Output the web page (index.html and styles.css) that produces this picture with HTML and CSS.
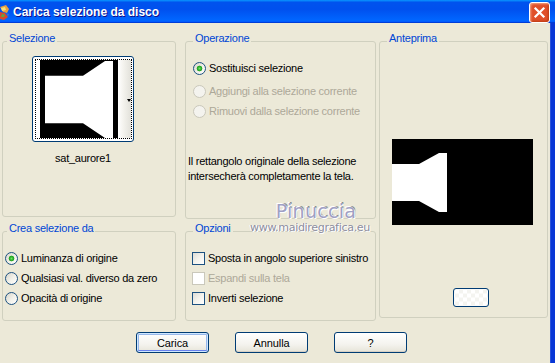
FILE: index.html
```html
<!DOCTYPE html>
<html lang="it">
<head>
<meta charset="utf-8">
<title>Carica selezione da disco</title>
<link rel="stylesheet" href="styles.css">
</head>
<body>
<div class="window">
  <div class="titlebar">
    <svg class="app-icon" width="10" height="18" viewBox="0 0 10 18">
      <path d="M0 3 L6 1 L9 5 L7 9 L3 8 Z" fill="#e8a040"/>
      <path d="M0 8 L5 9 L8 13 L4 16 L0 15 Z" fill="#d94a2a"/>
      <path d="M1 4 L5 3 L6 6 L2 7 Z" fill="#f6e27a"/>
      <path d="M2 10 L5 11 L4 13 L1 13 Z" fill="#5aa845"/>
      <path d="M6 9 L9 10 L8 13 Z" fill="#3a6fd0"/>
    </svg>
    <span class="title">Carica selezione da disco</span>
    <span class="close" role="button" aria-label="Chiudi">
      <svg width="19" height="19" viewBox="0 0 19 19">
        <path d="M5.5 5.5 L13.5 13.5 M13.5 5.5 L5.5 13.5" stroke="#ffffff" stroke-width="2.2" stroke-linecap="square"/>
      </svg>
    </span>
  </div>
  <div class="client">
    <div class="groups">
      <fieldset class="group g-sel">
        <legend>Selezione</legend>
        <div class="thumb-wrap">
          <div class="thumb">
            <div class="focus">
              <svg class="thumb-img" width="78" height="78" viewBox="0 0 78 79" preserveAspectRatio="none">
                <rect width="78" height="79" fill="#000"/>
                <polygon points="5,16 43,16 65,1 73,1 73,79 65,79 43,64 5,64" fill="#fff"/>
              </svg>
              <div class="strip"><span class="arrow"></span></div>
            </div>
          </div>
          <div class="thumb-name">sat_aurore1</div>
        </div>
      </fieldset>

      <fieldset class="group g-op">
        <legend>Operazione</legend>
        <label class="opt row1"><input type="radio" class="radio" name="op" checked><span>Sostituisci selezione</span></label>
        <label class="opt row2 disabled"><input type="radio" class="radio" name="op" disabled><span>Aggiungi alla selezione corrente</span></label>
        <label class="opt disabled"><input type="radio" class="radio" name="op" disabled><span>Rimuovi dalla selezione corrente</span></label>
        <p class="note">Il rettangolo originale della selezione intersecherà completamente la tela.</p>
      </fieldset>

      <fieldset class="group g-prev">
        <legend>Anteprima</legend>
        <svg class="preview" width="141" height="86" viewBox="0 0 141 86">
          <rect width="141" height="86" fill="#000"/>
          <polygon points="0,25 27,25 47,14 55,14 55,73 47,73 27,62 0,62" fill="#fff"/>
        </svg>
        <button class="mini-btn" aria-label="Sfondo"></button>
      </fieldset>

      <fieldset class="group g-crea">
        <legend>Crea selezione da</legend>
        <label class="opt"><input type="radio" class="radio" name="src" checked><span>Luminanza di origine</span></label>
        <label class="opt"><input type="radio" class="radio" name="src"><span>Qualsiasi val. diverso da zero</span></label>
        <label class="opt"><input type="radio" class="radio" name="src"><span>Opacità di origine</span></label>
      </fieldset>

      <fieldset class="group g-opz">
        <legend>Opzioni</legend>
        <label class="opt"><input type="checkbox" class="check"><span>Sposta in angolo superiore sinistro</span></label>
        <label class="opt disabled"><input type="checkbox" class="check" disabled><span>Espandi sulla tela</span></label>
        <label class="opt"><input type="checkbox" class="check"><span>Inverti selezione</span></label>
      </fieldset>
    </div>
    <div class="buttons">
      <button class="btn default">Carica</button>
      <button class="btn">Annulla</button>
      <button class="btn">?</button>
    </div>
  </div>
  <div class="watermark">
    <div class="wm-name">Pinuccia</div>
    <div class="wm-url">www.maidiregrafica.eu</div>
  </div>
</div>
</body>
</html>
```
FILE: styles.css
```css
* { box-sizing: border-box; }

html, body {
  margin: 0;
  padding: 0;
  width: 555px;
  height: 363px;
  overflow: hidden;
  background: #ECE9D8;
}

body {
  font-family: "Liberation Sans", Arial, sans-serif;
  font-size: 11px;
  letter-spacing: -0.25px;
  color: #000;
}

.window {
  position: relative;
  width: 555px;
  height: 363px;
  display: flex;
  flex-direction: column;
  background: #ECE9D8;
}

/* ---------- title bar ---------- */
.titlebar {
  height: 23px;
  flex: none;
  display: flex;
  align-items: center;
  background: linear-gradient(180deg, #0997ff 0%, #0053ee 10%, #0050ee 40%, #0060fb 75%, #0066ff 88%, #005bff 94%, #003dd7 97%, #003dd7 100%);
}

.app-icon {
  flex: none;
  margin-top: 2px;
}

.title {
  margin-left: 3px;
  color: #fff;
  font-weight: bold;
  font-size: 12px;
  letter-spacing: 0;
  text-shadow: 1px 1px 0 #0f1089;
}

.close {
  flex: none;
  display: block;
  width: 21px;
  height: 21px;
  margin-left: auto;
  margin-right: 5px;
  margin-top: 1px;
  border: 1px solid #ffffff;
  border-radius: 3px;
  background-color: #e0502a;
  box-shadow: inset 1px 1px 2px #f3a585, inset -1px -1px 2px #b8340c;
}

.close svg { display: block; }

/* ---------- client area ---------- */
.client {
  flex: 1;
  padding: 9px 0 0 2px;
  border-right: 4px solid #0836d6;
  box-shadow: inset -1px 0 0 #2a52d8;
}

.groups {
  display: grid;
  grid-template-columns: 174px 9px 191px 3px 169px;
  grid-template-rows: 185px 99px;
  row-gap: 5px;
  grid-template-areas:
    "sel . op . prev"
    "crea . opz . prev";
}

.group {
  margin: 0;
  padding: 0 2px;
  min-width: 0;
  border: 1px solid #d0d0bf;
  border-radius: 3px;
}

.group legend {
  padding: 0 2px 5px;
  margin-left: 2px;
  line-height: 13px;
  color: #0046d5;
}

.g-sel { grid-area: sel; }
.g-op { grid-area: op; margin-bottom: -2px; }
.g-prev { grid-area: prev; margin-bottom: 3px; }
.g-crea { grid-area: crea; }
.g-opz { grid-area: opz; }

.g-op legend,
.g-prev legend,
.g-opz legend { margin-left: 5px; }

/* Selezione */
.thumb-wrap {
  width: 102px;
  margin: 6px 0 0 27px;
}

.thumb {
  width: 102px;
  height: 86px;
  border: 1px solid #003c74;
  border-radius: 3px;
  background: #fff;
  padding: 2px 1px 2px 2px;
}

.focus {
  height: 100%;
  border: 1px dotted #000;
  display: flex;
  padding-left: 4px;
}

.thumb-img {
  display: block;
  flex: none;
}

.strip {
  flex: 1;
  background: linear-gradient(90deg, #ffffff 0%, #f4f3ee 40%, #e2e1da 100%);
  display: flex;
  justify-content: flex-end;
  align-items: center;
}

.arrow {
  width: 0;
  height: 0;
  margin-top: 2px;
  border-left: 2.5px solid transparent;
  border-right: 2.5px solid transparent;
  border-top: 3px solid #000;
}

.thumb-name {
  margin-top: 10px;
  line-height: 13px;
  text-align: center;
}

/* options */
.opt {
  display: flex;
  align-items: center;
  height: 20px;
  gap: 3px;
  white-space: nowrap;
}

.opt.disabled { color: #aca899; }

.g-op .opt { padding-left: 5px; }
.g-op .row1 { margin-top: 8px; }
.g-op .row2 { margin-top: 3px; }

.g-crea .opt:first-of-type,
.g-opz .opt:first-of-type { margin-top: 8px; }

.g-crea .opt { padding-left: 0; }
.g-opz .opt { padding-left: 4px; }

.note {
  margin: 33px 0 0 0;
  line-height: 14.5px;
}

.radio {
  appearance: none;
  -webkit-appearance: none;
  flex: none;
  width: 13px;
  height: 13px;
  margin: 0;
  border: 1px solid #1c5180;
  border-radius: 50%;
  background: linear-gradient(135deg, #d8d6cc 0%, #f2f1ea 55%, #ffffff 100%);
}

.radio:checked {
  background:
    radial-gradient(circle at 50% 50%, #6fe56a 0, #36b832 1.5px, #21a121 2.5px, rgba(33,161,33,0) 3.2px),
    linear-gradient(135deg, #d8d6cc 0%, #f2f1ea 55%, #ffffff 100%);
}

.radio:disabled {
  border-color: #cac8bb;
  background: #f4f3ee;
}

.check {
  appearance: none;
  -webkit-appearance: none;
  flex: none;
  width: 13px;
  height: 13px;
  margin: 0;
  border: 1px solid #1c5180;
  background: linear-gradient(135deg, #dcdcd7 0%, #f3f2ec 50%, #ffffff 100%);
}

.check:disabled {
  border-color: #cac8bb;
  background: #fff;
}

/* Anteprima */
.preview {
  display: block;
  margin: 89px 0 0 10px;
}

.mini-btn {
  display: block;
  width: 36px;
  height: 19px;
  margin: 63px 0 0 71px;
  padding: 0;
  border: 1px solid #003c74;
  border-radius: 3px;
  background:
    repeating-conic-gradient(#f4f4f0 0 25%, #ffffff 0 50%) 50% 50% / 8px 8px;
}

/* buttons */
.buttons {
  display: flex;
  gap: 26px;
  margin-top: 11px;
  padding-left: 134px;
}

.btn {
  width: 73px;
  height: 21px;
  padding: 0;
  font-family: "Liberation Sans", Arial, sans-serif;
  font-size: 11px;
  letter-spacing: -0.1px;
  color: #000;
  border: 1px solid #003c74;
  border-radius: 3px;
  background: linear-gradient(180deg, #ffffff 0%, #f4f3ee 60%, #e6e4d8 100%);
  box-shadow: inset 0 -1px 0 #d6d0c5;
}

.btn.default {
  box-shadow: inset 0 0 0 1px #cee7ff, inset 0 -2px 0 #6982ee, inset 0 0 0 2px #98b8ea;
}

/* watermark overlay */
.watermark {
  position: absolute;
  left: 248px;
  top: 201px;
  width: 124px;
  text-align: center;
  pointer-events: none;
  letter-spacing: 0;
}

.wm-name {
  margin-left: 12px;
  font-family: "DejaVu Sans", sans-serif;
  font-size: 19px;
  line-height: 20px;
  color: #a0a0c4;
  letter-spacing: 0.3px;
  text-shadow: 0 0 1px #fff, 1px 1px 0 #fff, -1px -1px 0 #fff, 1px -1px 0 #888;
}

.wm-url {
  font-family: "DejaVu Sans", sans-serif;
  font-size: 11px;
  line-height: 14px;
  color: #8d8d9e;
  letter-spacing: -0.3px;
  text-shadow: 1px 1px 0 #fff, -1px 0 0 #fff;
}
```
